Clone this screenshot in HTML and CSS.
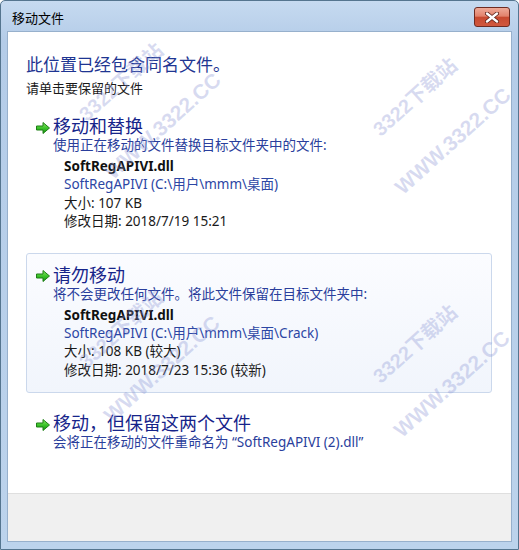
FILE: index.html
```html
<!DOCTYPE html>
<html lang="zh-CN">
<head>
    <meta charset="UTF-8">
    <meta name="viewport" content="width=device-width, initial-scale=1.0">
    <title>移动文件</title>
    <link rel="stylesheet" href="styles.css">
</head>
<body>
    <div class="window">
        <div class="titlebar">
            <span class="title">移动文件</span>
            <div class="close">
                <svg width="14" height="11" viewBox="0 0 14 11">
                    <path d="M2 1.5 L12 9.5 M12 1.5 L2 9.5" stroke="#5a2018" stroke-width="4" stroke-linecap="round"/>
                    <path d="M2 1.5 L12 9.5 M12 1.5 L2 9.5" stroke="#fff" stroke-width="2.4" stroke-linecap="round"/>
                </svg>
            </div>
        </div>
        <div class="client">
            <div class="content">
                <h1 class="instruction">此位置已经包含同名文件。</h1>
                <p class="hint">请单击要保留的文件</p>

                <div class="options">
                    <div class="option">
                        <div class="option-head">
                            <svg class="arrow" width="16" height="16" viewBox="0 0 16 16">
                                <defs>
                                    <linearGradient id="g1" x1="0" y1="0" x2="0" y2="1">
                                        <stop offset="0" stop-color="#8fe86a"/>
                                        <stop offset="0.5" stop-color="#3cc42a"/>
                                        <stop offset="1" stop-color="#159212"/>
                                    </linearGradient>
                                </defs>
                                <path d="M1.5 6 H8 V2.5 L14.5 8 L8 13.5 V10 H1.5 Z" fill="url(#g1)" stroke="#1d7f15" stroke-width="1" stroke-linejoin="round"/>
                            </svg>
                            <span class="option-title">移动和替换</span>
                        </div>
                        <p class="option-desc">使用正在移动的文件替换目标文件夹中的文件:</p>
                        <div class="file">
                            <div class="file-name">SoftRegAPIVI.dll</div>
                            <div class="file-path">SoftRegAPIVI (C:\用户\mmm\桌面)</div>
                            <div>大小: 107 KB</div>
                            <div>修改日期: 2018/7/19 15:21</div>
                        </div>
                    </div>

                    <div class="option selected">
                        <div class="option-head">
                            <svg class="arrow" width="16" height="16" viewBox="0 0 16 16">
                                <defs>
                                    <linearGradient id="g2" x1="0" y1="0" x2="0" y2="1">
                                        <stop offset="0" stop-color="#8fe86a"/>
                                        <stop offset="0.5" stop-color="#3cc42a"/>
                                        <stop offset="1" stop-color="#159212"/>
                                    </linearGradient>
                                </defs>
                                <path d="M1.5 6 H8 V2.5 L14.5 8 L8 13.5 V10 H1.5 Z" fill="url(#g2)" stroke="#1d7f15" stroke-width="1" stroke-linejoin="round"/>
                            </svg>
                            <span class="option-title">请勿移动</span>
                        </div>
                        <p class="option-desc">将不会更改任何文件。将此文件保留在目标文件夹中:</p>
                        <div class="file">
                            <div class="file-name">SoftRegAPIVI.dll</div>
                            <div class="file-path">SoftRegAPIVI (C:\用户\mmm\桌面\Crack)</div>
                            <div>大小: 108 KB (较大)</div>
                            <div>修改日期: 2018/7/23 15:36 (较新)</div>
                        </div>
                    </div>

                    <div class="option">
                        <div class="option-head">
                            <svg class="arrow" width="16" height="16" viewBox="0 0 16 16">
                                <defs>
                                    <linearGradient id="g3" x1="0" y1="0" x2="0" y2="1">
                                        <stop offset="0" stop-color="#8fe86a"/>
                                        <stop offset="0.5" stop-color="#3cc42a"/>
                                        <stop offset="1" stop-color="#159212"/>
                                    </linearGradient>
                                </defs>
                                <path d="M1.5 6 H8 V2.5 L14.5 8 L8 13.5 V10 H1.5 Z" fill="url(#g3)" stroke="#1d7f15" stroke-width="1" stroke-linejoin="round"/>
                            </svg>
                            <span class="option-title">移动，但保留这两个文件</span>
                        </div>
                        <p class="option-desc">会将正在移动的文件重命名为 “SoftRegAPIVI (2).dll”</p>
                    </div>
                </div>
            </div>
            <div class="footer"></div>
        </div>

        <!-- watermark -->
        <div class="wm wm-a" style="left: 413px; top: 95px;">3322下载站</div>
        <div class="wm wm-b" style="left: 452px; top: 140px;">WWW.3322.CC</div>
        <div class="wm wm-a" style="left: 413px; top: 342px;">3322下载站</div>
        <div class="wm wm-b" style="left: 451px; top: 383px;">WWW.3322.CC</div>
        <div class="wm wm-a" style="left: 119px; top: 80px;">3322下载站</div>
        <div class="wm wm-b" style="left: 162px; top: 125px;">WWW.3322.CC</div>
        <div class="wm wm-a" style="left: 119px; top: 327px;">3322下载站</div>
        <div class="wm wm-b" style="left: 161px; top: 368px;">WWW.3322.CC</div>
    </div>
</body>
</html>
```

FILE: styles.css
```css
body {
    margin: 0;
    background: #fff;
    font-family: "Noto Sans", "Noto Sans CJK SC", sans-serif;
}
.window {
    position: relative;
    box-sizing: border-box;
    width: 519px;
    height: 550px;
    display: flex;
    flex-direction: column;
    border: 1px solid #55758f;
    border-radius: 5px 5px 0 0;
    background: linear-gradient(#c6daf0, #b4cce8 40px, #bcd3ec);
    overflow: hidden;
}
.titlebar {
    height: 30px;
    display: flex;
    align-items: center;
    justify-content: space-between;
    padding-top: 2px;
    box-sizing: border-box;
}
.title {
    padding-left: 11px;
    font-size: 13px;
    color: #000;
    font-family: "Noto Sans CJK SC", sans-serif;
}
.close {
    width: 36px;
    height: 20px;
    margin-right: 8px;
    box-sizing: border-box;
    border: 1px solid #6e2b22;
    border-radius: 3px;
    background: linear-gradient(#eeaa98 0%, #e2826c 45%, #c84a30 52%, #d0583e 100%);
    display: flex;
    align-items: center;
    justify-content: center;
}
.client {
    flex: 1;
    margin: 0 6px 7px 6px;
    border: 1px solid #97b0cc;
    display: flex;
    flex-direction: column;
    background: #fff;
}
.content {
    flex: 1;
    padding: 21px 19px 0 18px;
}
.instruction {
    margin: 0;
    font-size: 17px;
    line-height: 22px;
    font-weight: normal;
    color: #1e3592;
    font-family: "Noto Sans CJK SC", sans-serif;
}
.hint {
    margin: 4px 0 7px;
    font-size: 13px;
    line-height: 18px;
    color: #1a1a1a;
    font-family: "Noto Sans CJK SC", sans-serif;
}
.options {
    display: flex;
    flex-direction: column;
    gap: 8px;
}
.option {
    border: 1px solid transparent;
    border-radius: 3px;
    padding: 9px 10px 13px 8px;
}
.option.selected {
    border-color: #cbd8ec;
    background: linear-gradient(#fbfcff, #f1f5fc);
}
.option-head {
    display: flex;
    align-items: center;
    gap: 2px;
}
.arrow {
    margin-top: 5px;
    flex-shrink: 0;
}
.option-title {
    font-size: 18px;
    line-height: 22px;
    color: #16248a;
    font-family: "Noto Sans CJK SC", sans-serif;
}
.option-desc {
    margin: 0 0 0 18px;
    font-size: 13.5px;
    line-height: 18px;
    color: #2a3e9c;
}
.file {
    margin: 3px 0 0 29px;
    font-size: 13.5px;
    line-height: 18.4px;
    color: #1a1a1a;
}
.file-name {
    font-weight: bold;
    color: #111;
}
.file-path {
    color: #2c46a4;
}
.footer {
    height: 47px;
    background: #f0f0f0;
    border-top: 1px solid #dfdfdf;
}
.wm {
    position: absolute;
    transform: translate(-50%, -50%) rotate(-42deg);
    white-space: nowrap;
    font-family: "Liberation Sans", "Noto Sans CJK SC", sans-serif;
    font-weight: bold;
    color: rgba(140, 150, 212, 0.34);
    pointer-events: none;
}
.wm-a {
    font-size: 20px;
}
.wm-b {
    font-size: 21px;
}
```
